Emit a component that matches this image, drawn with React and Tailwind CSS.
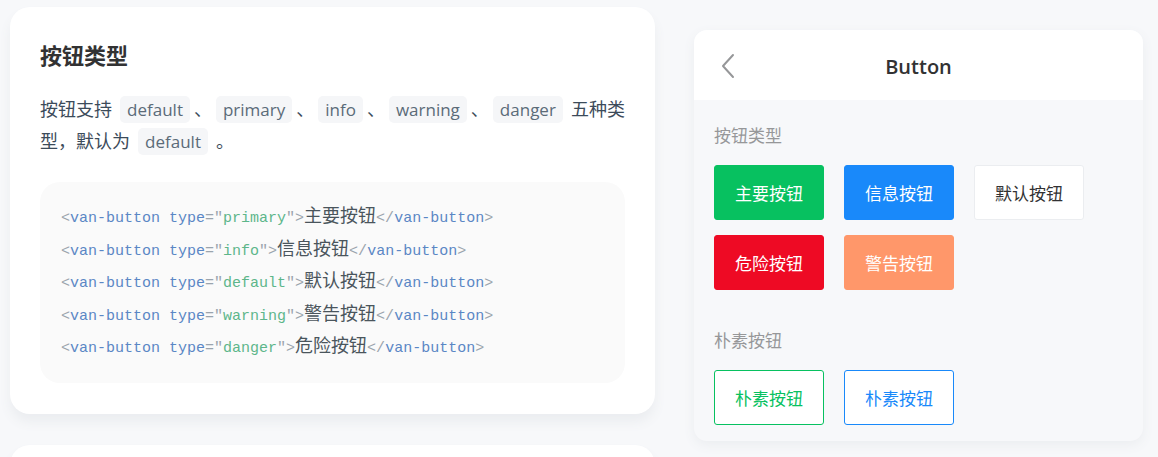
import React from "react";

const Code = ({ children }) => (
    <code className="mx-[4px] rounded-[5px] bg-[#f5f6f8] px-[7px] py-[2px] font-['Open_Sans',sans-serif] text-[17px] leading-[20px] text-[#5b6b78]">
        {children}
    </code>
);

const lines = [
    ["primary", "主要按钮"],
    ["info", "信息按钮"],
    ["default", "默认按钮"],
    ["warning", "警告按钮"],
    ["danger", "危险按钮"],
];

const CodeLine = ({ type, label }) => (
    <div className="h-[32.5px] whitespace-pre leading-[32.5px]">
        <span className="text-[#9aa4ad]">&lt;</span>
        <span className="text-[#5a87c5]">van-button</span> <span className="text-[#5a87c5]">type</span>
        <span className="text-[#9aa4ad]">=&quot;</span>
        <span className="text-[#5db68a]">{type}</span>
        <span className="text-[#9aa4ad]">&quot;&gt;</span>
        <span className="font-['Noto_Sans_CJK_SC',sans-serif] text-[18px] leading-[20px] text-[#4a555c]">{label}</span>
        <span className="text-[#9aa4ad]">&lt;/</span>
        <span className="text-[#5a87c5]">van-button</span>
        <span className="text-[#9aa4ad]">&gt;</span>
    </div>
);

const solid = [
    { text: "主要按钮", cls: "bg-[#07c160] border-[#07c160] text-white" },
    { text: "信息按钮", cls: "bg-[#1989fa] border-[#1989fa] text-white" },
    { text: "默认按钮", cls: "bg-white border-[#ebedf0] text-[#323233]" },
    { text: "危险按钮", cls: "bg-[#ee0a24] border-[#ee0a24] text-white" },
    { text: "警告按钮", cls: "bg-[#ff976a] border-[#ff976a] text-white" },
];

const plain = [
    { text: "朴素按钮", cls: "bg-white border-[#07c160] text-[#07c160]" },
    { text: "朴素按钮", cls: "bg-white border-[#1989fa] text-[#1989fa]" },
];

const DemoButton = ({ text, cls }) => (
    <button className={`flex h-[55px] w-[110px] items-center justify-center rounded-[3px] border text-[17px] ${cls}`}>
        {text}
    </button>
);

export default function App() {
    return (
        <div className="flex h-[457px] w-[1158px] items-start overflow-hidden bg-[#f7f8fa] font-['Open_Sans','Noto_Sans_CJK_SC',sans-serif]">
            {/* doc column */}
            <div className="ml-[10px] flex w-[645px] shrink-0 flex-col gap-[31px] pt-[7px]">
                <div className="rounded-[20px] bg-white px-[30px] pb-[31px] pt-[32px] shadow-[0_8px_12px_#ebedf0]">
                    <h3 className="font-['Noto_Sans_CJK_SC',sans-serif] text-[22px] font-bold leading-[30px] text-[#323233]">按钮类型</h3>
                    <p className="mt-[23px] font-['Noto_Sans_CJK_SC',sans-serif] text-[18px] leading-[32px] text-[#3c4b5a]">
                        按钮支持 <Code>default</Code>、<Code>primary</Code>、<Code>info</Code>、<Code>warning</Code>、<Code>danger</Code> 五种类型，默认为 <Code>default</Code> 。
                    </p>
                    <div className="mt-[26px] rounded-[20px] bg-[#fafafa] px-[21px] pb-[17px] pt-[21px] font-['Liberation_Mono',monospace] text-[15px]">
                        {lines.map(([type, label]) => (
                            <CodeLine key={type} type={type} label={label} />
                        ))}
                    </div>
                </div>
                <div className="h-[60px] rounded-[20px] bg-white shadow-[0_8px_12px_#ebedf0]" />
            </div>

            {/* phone simulator */}
            <div className="ml-[39px] mt-[30px] w-[449px] shrink-0 overflow-hidden rounded-[13px] bg-[#f7f8fa] shadow-[0_4px_12px_#ebedf0]">
                <div className="relative flex h-[70px] items-center justify-center bg-white pt-[3px]">
                    <svg className="absolute left-[26px] top-[23px]" width="16" height="26" viewBox="0 0 16 26" fill="none">
                        <polyline points="13,2 3,13 13,24" stroke="#969799" strokeWidth="2" strokeLinecap="round" strokeLinejoin="round" />
                    </svg>
                    <span className="font-['Open_Sans',sans-serif] text-[20px] font-semibold text-[#323233]">Button</span>
                </div>
                <div className="px-[20px] pb-[16px]">
                    <div className="pt-[25px] font-['Noto_Sans_CJK_SC',sans-serif] text-[17px] leading-[20px] text-[#969799]">按钮类型</div>
                    <div className="mt-[20px] flex flex-wrap gap-x-[20px] gap-y-[15px] font-['Noto_Sans_CJK_SC',sans-serif]">
                        {solid.map((b) => (
                            <DemoButton key={b.text} {...b} />
                        ))}
                    </div>
                    <div className="mt-[40px] font-['Noto_Sans_CJK_SC',sans-serif] text-[17px] leading-[20px] text-[#969799]">朴素按钮</div>
                    <div className="mt-[20px] flex gap-[20px] font-['Noto_Sans_CJK_SC',sans-serif]">
                        {plain.map((b, i) => (
                            <DemoButton key={i} {...b} />
                        ))}
                    </div>
                </div>
            </div>
        </div>
    );
}
